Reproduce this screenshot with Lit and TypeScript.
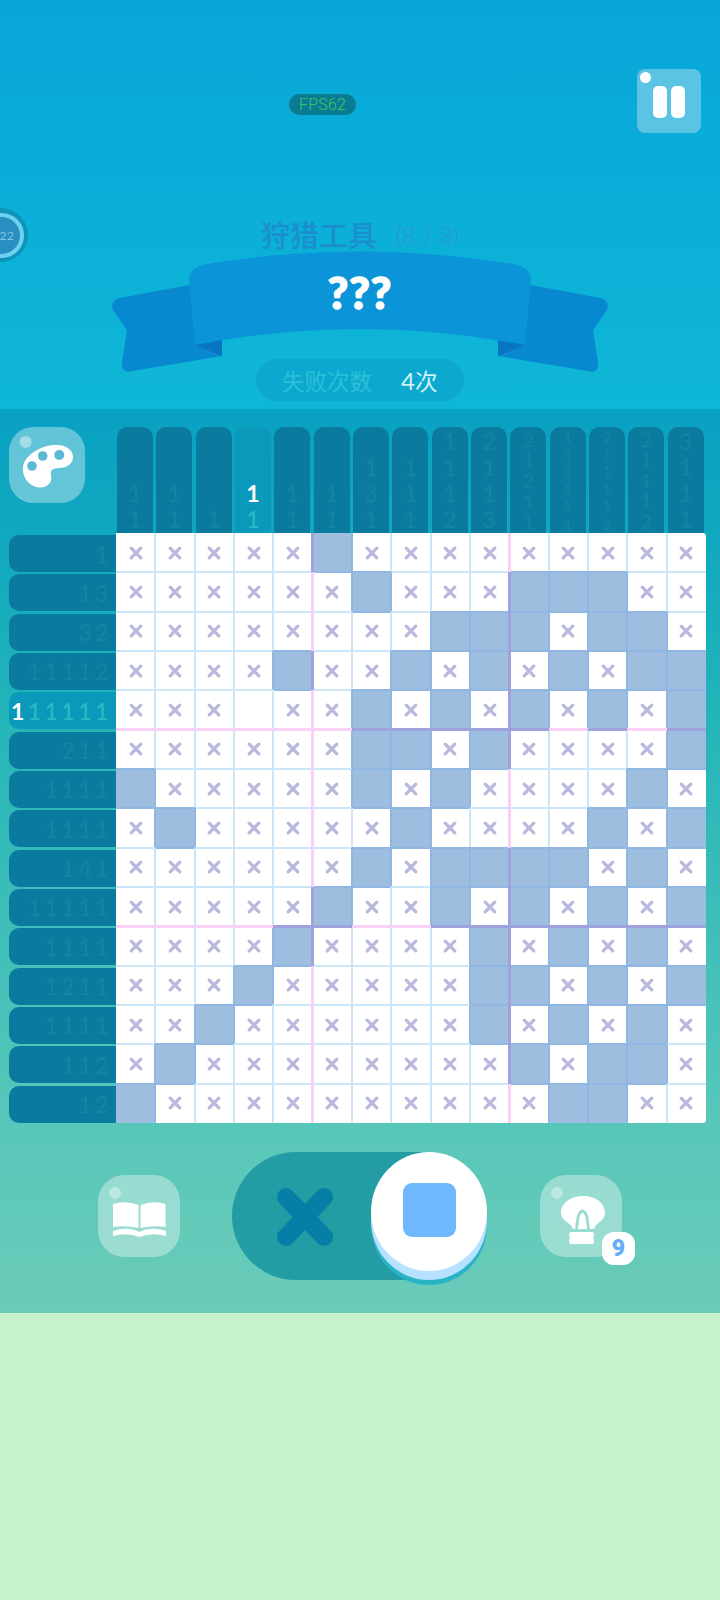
import { LitElement, html, css, svg } from "lit";
import { customElement } from "lit/decorators.js";

const FILLED: number[][] = [
  [6],
  [7, 11, 12, 13],
  [9, 10, 11, 13, 14],
  [5, 8, 10, 12, 14, 15],
  [7, 9, 11, 13, 15],
  [7, 8, 10, 15],
  [1, 7, 9, 14],
  [2, 8, 13, 15],
  [7, 9, 10, 11, 12, 14],
  [6, 9, 11, 13, 15],
  [5, 10, 12, 14],
  [4, 10, 11, 13, 15],
  [3, 10, 12, 14],
  [2, 11, 13, 14],
  [1, 12, 13],
];
const COLS = ["11", "11", "1", "11", "11", "11", "131", "111", "1112", "2113", "21211", "111111", "211112", "21112", "3111"];
const ROWS = ["1", "13", "32", "11112", "111111", "211", "1111", "1111", "141", "11111", "1111", "1211", "1111", "112", "12"];

const isFilled = (r: number, c: number) => !!FILLED[r] && FILLED[r].includes(c + 1);

@customElement("app-root")
export class AppRoot extends LitElement {
  static styles = css`
    :host { display: block; width: 720px; height: 1600px; background: #c5f2c8; overflow: hidden; font-family: "Lato", "Noto Sans CJK SC", sans-serif; }
    .game { display: flex; flex-direction: column; position: relative; }
    .top { height: 409px; box-sizing: border-box; background: linear-gradient(180deg, #07a6d9 0%, #0fb7d6 100%); display: flex; flex-direction: column; align-items: center; position: relative; overflow: hidden; }
    .bar { width: 100%; height: 133px; box-sizing: border-box; padding: 69px 19px 0 289px; display: flex; align-items: flex-start; justify-content: space-between; }
    .fps { margin-top: 25px; width: 67px; height: 21px; border-radius: 11px; background: #0b7b92; color: #35c96c; font: 300 16px/21px "Roboto", sans-serif; text-align: center; letter-spacing: 0.2px; }
    .pause { width: 64px; height: 64px; border-radius: 8px; background: #5bc4e4; position: relative; display: flex; gap: 4px; padding: 17px 0 0 16px; box-sizing: border-box; }
    .pause i { display: block; width: 14px; height: 32px; border-radius: 5px; background: #fff; }
    .pause b { position: absolute; left: 3px; top: 3px; width: 11px; height: 11px; border-radius: 50%; background: #fff; }
    .timer { position: absolute; left: -26px; top: 208px; width: 54px; height: 54px; border-radius: 50%; background: #0e93bb; display: flex; align-items: center; justify-content: center; }
    .timer div { width: 45px; height: 45px; box-sizing: border-box; border-radius: 50%; background: #2b8ec1; border: 4px solid #6ed1ef; color: #7fc8e2; font-size: 12px; line-height: 37px; padding-left: 17px; letter-spacing: 0.5px; }
    .title { margin-top: 86px; height: 31px; display: flex; align-items: center; gap: 19px; color: #1b8ecb; }
    .title h1 { margin: 0; font: 500 29px/31px "Noto Sans CJK SC", sans-serif; }
    .title span { font: 300 23px/31px "Lato", sans-serif; color: #2c93cb; word-spacing: 1px; position: relative; top: 1px; }
    .ribbon { display: grid; width: 500px; height: 109px; }
    .ribbon svg { grid-area: 1 / 1; width: 500px; height: 125px; overflow: visible; }
    .ribbon strong { grid-area: 1 / 1; justify-self: center; margin-top: 17px; color: #fff; font: 900 44px/50px "Lato", sans-serif; z-index: 1; letter-spacing: 1px; -webkit-text-stroke: 1.6px #fff; }
    .fail { width: 208px; height: 42px; border-radius: 21px; background: #0ca8d0; display: flex; align-items: center; padding-left: 26px; box-sizing: border-box; font: 400 22.5px/42px "Noto Sans CJK SC", sans-serif; color: #2cc0d8; }
    .fail em { font-style: normal; color: #d2f1f7; margin-left: 29px; font-size: 22.5px; }
    .fail em span { font-family: "Lato", sans-serif; font-size: 24px; }

    .panel { height: 904px; box-sizing: border-box; padding-top: 18px; background: linear-gradient(180deg, #08a1c3 0%, #10a8bf 14%, #25b5b9 35%, #58c7b9 79%, #6bcbb8 100%); }
    .board { display: grid; grid-template-columns: 116px 590px; grid-template-rows: 106px 590px; }
    .corner { padding-left: 9px; }
    .round-btn { border-radius: 32%; background: rgba(255,255,255,.36); display: block; }
    .palette { width: 76px; height: 76px; }
    .col-hints { display: grid; grid-template-columns: repeat(15, 1fr); }
    .col { width: 36px; margin-left: 1px; border-radius: 10px 10px 0 0; background: #0a7a9e; display: flex; flex-direction: column; justify-content: flex-end; align-items: center; color: #1484a2; font-weight: 500; box-sizing: border-box; }
    .col span { display: block; text-align: center; }
    .c4 { font-size: 23px; line-height: 26px; padding-bottom: 1px; }
    .c5 { font-size: 18.5px; line-height: 20.5px; padding-bottom: 1px; }
    .c6 { font-size: 15.5px; line-height: 17.4px; padding-bottom: 0; }
    .col.on, .row.on { background: #0a98bb; color: #27bcc4; }
    .col .now, .row .now { color: #fff; font-weight: 700; }
    .row-hints { padding-left: 9px; display: grid; grid-template-rows: repeat(15, 1fr); }
    .row { margin-top: 2px; height: 37px; border-radius: 10px 0 0 10px; background: #0a7a9e; color: #1484a2; display: flex; justify-content: flex-end; align-items: center; padding-right: 6px; font-size: 23px; font-weight: 500; }
    .row span { width: 16.8px; text-align: center; }
    .cells { display: grid; grid-template-columns: repeat(15, 1fr); grid-template-rows: repeat(15, 1fr); border-radius: 0 4px 4px 0; overflow: hidden; background: #fff; }
    .cell { position: relative; display: flex; align-items: center; justify-content: center; background: #fff; }
    .cell.fill { background: #9dbedf; }
    .cell svg { width: 16px; height: 16px; display: block; }
    .cell::before { content: ""; position: absolute; top: 0; bottom: 0; right: -1px; width: 2px; z-index: 1; background: var(--rc); }
    .cell::after { content: ""; position: absolute; left: 0; right: 0; bottom: -1px; height: 2px; z-index: 1; background: var(--bc); }
    .r-l { --rc: #cbe6f8; } .r-f { --rc: #90b7e2; } .r-m { --rc: #fad0f6; } .r-p { --rc: #a0a2dd; }
    .b-l { --bc: #cbe6f8; } .b-f { --bc: #90b7e2; } .b-m { --bc: #fad0f6; } .b-p { --bc: #a0a2dd; }
    .r-m::before, .r-p::before { width: 3px; right: -1.5px; z-index: 2; }
    .b-m::after, .b-p::after { height: 3px; bottom: -1.5px; z-index: 2; }

    .controls { display: flex; align-items: center; padding: 29px 0 0 98px; }
    .tool { width: 82px; height: 82px; position: relative; }
    .tool svg { width: 82px; height: 82px; display: block; }
    .badge { position: absolute; left: 62px; top: 57px; width: 33px; height: 33px; border-radius: 12px; background: #fff; color: #62adf8; font: 900 23px/33px "Roboto", sans-serif; text-align: center; }
    .toggle { margin: 0 53px 0 52px; width: 255px; height: 128px; border-radius: 64px; background: #249ca4; position: relative; }
    .toggle > svg { position: absolute; left: 41px; top: 32px; width: 64px; height: 66px; }
    .knob { position: absolute; right: 0; top: 0; width: 116px; height: 119px; border-radius: 50%; background: #fff; box-shadow: 0 9px 0 #b6e2ff, 0 14px 0 #2ab3c6; display: flex; align-items: center; justify-content: center; }
    .knob i { display: block; width: 53px; height: 54px; border-radius: 9px; background: #6fb8fe; margin-top: -3px; }
    .rest { height: 287px; background: #c5f2c8; }
  `;

  private xMark() {
    return svg`<svg viewBox="0 0 16 16"><path d="M3.2 3.2 12.8 12.8M12.8 3.2 3.2 12.8" stroke="#b9b8dd" stroke-width="3.3" stroke-linecap="round" fill="none"/></svg>`;
  }

  private edge(prefix: string, a: boolean, b: boolean, major: boolean) {
    const any = a || b;
    if (major) return `${prefix}-${any ? "p" : "m"}`;
    return `${prefix}-${any ? "f" : "l"}`;
  }

  private renderCells() {
    const out = [];
    for (let r = 0; r < 15; r++) {
      for (let c = 0; c < 15; c++) {
        const f = isFilled(r, c);
        const blank = r === 4 && c === 3;
        const rightEdge = c < 14 ? this.edge("r", f, isFilled(r, c + 1), (c + 1) % 5 === 0) : "r-none";
        const bottomEdge = r < 14 ? this.edge("b", f, isFilled(r + 1, c), (r + 1) % 5 === 0) : "b-none";
        out.push(html`<div class="cell ${f ? "fill" : ""} ${rightEdge} ${bottomEdge}">${!f && !blank ? this.xMark() : ""}</div>`);
      }
    }
    return out;
  }

  render() {
    return html`
      <div class="game">
        <section class="top">
          <div class="bar">
            <div class="fps">FPS62</div>
            <div class="pause"><b></b><i></i><i></i></div>
          </div>
          <div class="timer"><div>22</div></div>
          <div class="title"><h1>狩猎工具</h1><span>(8 / 8)</span></div>
          <div class="ribbon">
            <svg viewBox="0 0 500 125">
              <path d="M79 35 L10 48 Q0 50 3 60 L17 80 L12 112 Q11 124 22 121 L112 106 L112 80 Z" fill="#0888cf"/>
              <path d="M85 95 L112 88 L112 106 Z" fill="#0775c2"/>
              <g transform="translate(500 0) scale(-1 1)">
                <path d="M79 35 L10 48 Q0 50 3 60 L17 80 L12 112 Q11 124 22 121 L112 106 L112 80 Z" fill="#0888cf"/>
                <path d="M85 95 L112 88 L112 106 Z" fill="#0775c2"/>
              </g>
              <path d="M79 32 Q79 19 92 15 Q250 -12 408 15 Q421 19 421 32 L415 95 Q250 63 85 95 Z" fill="#0b94d8"/>
            </svg>
            <strong>???</strong>
          </div>
          <div class="fail">失败次数<em><span>4</span>次</em></div>
        </section>
        <section class="panel">
          <div class="board">
            <div class="corner">
              <svg class="round-btn palette" viewBox="0 0 76 76">
                <circle cx="16.7" cy="15" r="6" fill="#fff" opacity=".42"/>
                <path d="M14 40 C15 28 34 17 48 18 C58 18 64 24 64 30 C64 38 56 41 50 41 C43 41 41 44 42 48 C44 55 38 61 31 60.5 C21 60 13 51 14 40 Z" fill="#fff"/>
                <circle cx="23" cy="39" r="4.8" fill="#5cb9d3"/>
                <circle cx="33.7" cy="29" r="4.8" fill="#5cb9d3"/>
                <circle cx="50.3" cy="28" r="5" fill="#5cb9d3"/>
              </svg>
            </div>
            <div class="col-hints">
              ${COLS.map((v, i) => {
                const digits = v.split("");
                const size = digits.length >= 6 ? "c6" : digits.length === 5 ? "c5" : "c4";
                return html`<div class="col ${size} ${i === 3 ? "on" : ""}">
                  ${digits.map((d, j) => html`<span class="${i === 3 && j === 0 ? "now" : ""}">${d}</span>`)}
                </div>`;
              })}
            </div>
            <div class="row-hints">
              ${ROWS.map((v, i) => html`<div class="row ${i === 4 ? "on" : ""}">
                ${v.split("").map((d, j) => html`<span class="${i === 4 && j === 0 ? "now" : ""}">${d}</span>`)}
              </div>`)}
            </div>
            <div class="cells">${this.renderCells()}</div>
          </div>
          <div class="controls">
            <div class="tool">
              <svg class="round-btn" viewBox="0 0 82 82">
                <circle cx="17" cy="18" r="6" fill="#fff" opacity=".35"/>
                <path d="M15 29 Q28 25 40.5 30 L40.5 53 Q28 50 15 52 Z" fill="#fff"/>
                <path d="M67.5 29 Q55 25 42.5 30 L42.5 53 Q55 50 67.5 52 Z" fill="#fff"/>
                <path d="M15 56 Q30 51 41.5 57 Q53 51 68 56 L68 61 Q54 57 41.5 62 Q29 57 15 61 Z" fill="#fff"/>
              </svg>
            </div>
            <div class="toggle">
              <svg viewBox="0 0 64 66"><path d="M13 13 L51 53 M51 13 L13 53" stroke="#067fa6" stroke-width="18" stroke-linecap="round" fill="none"/></svg>
              <div class="knob"><i></i></div>
            </div>
            <div class="tool">
              <svg class="round-btn" viewBox="0 0 82 82">
                <circle cx="17" cy="18" r="6" fill="#fff" opacity=".35"/>
                <path d="M43 21 C56 21 65 28 65 38 C65 46 56 47 54 54 L33 54 C31 47 21 46 21 38 C21 28 31 21 43 21 Z" fill="#fff"/>
                <path d="M36.5 54 L38 42 Q42.5 30 47 42 L48.5 54" stroke="#97dccf" stroke-width="2.8" fill="none"/>
                <path d="M30 57 L53 57 Q55 60 53 63 Q55 66 53 69 L30 69 Q28 66 30 63 Q28 60 30 57 Z" fill="#fff"/>
              </svg>
              <div class="badge">9</div>
            </div>
          </div>
        </section>
      </div>
      <div class="rest"></div>
    `;
  }
}
